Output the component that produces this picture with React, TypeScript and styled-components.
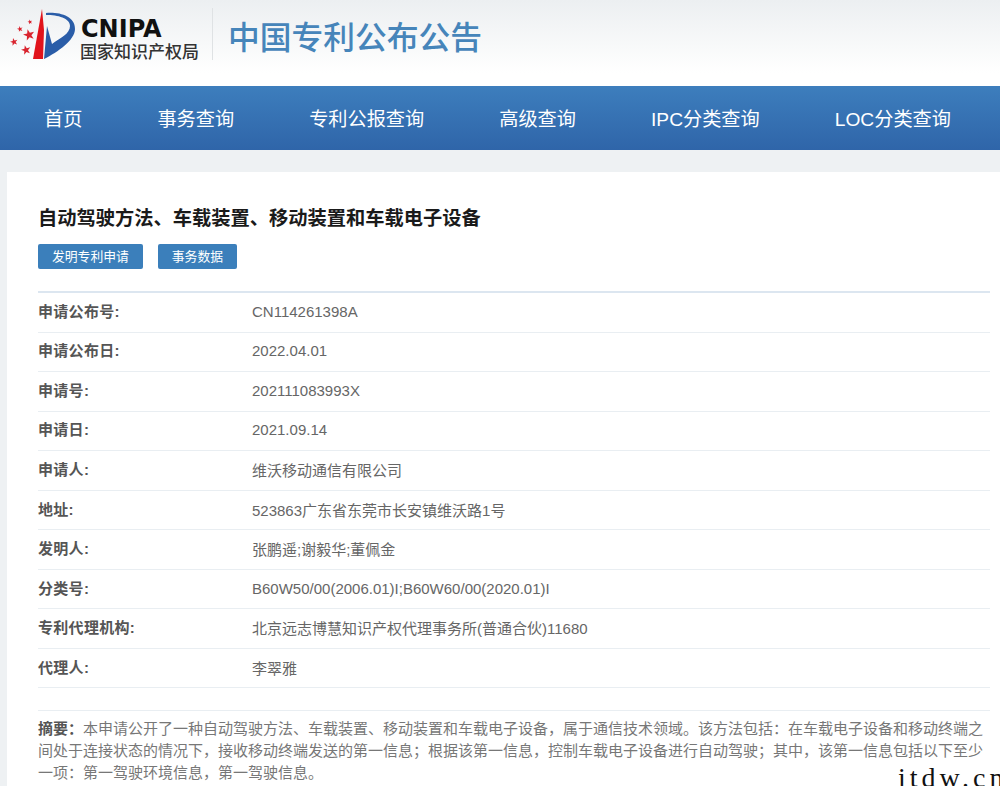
import React from 'react'
import styled, { createGlobalStyle } from 'styled-components'

const GlobalStyle = createGlobalStyle`
  html, body {
    margin: 0;
    padding: 0;
    background: #eef1f3;
    overflow: hidden;
  }
  * { box-sizing: border-box; }
`

const Page = styled.div`
  position: relative;
  width: 1000px;
  height: 786px;
  overflow: hidden;
  font-family: "Liberation Sans", "Noto Sans CJK SC", sans-serif;
`
const Header = styled.header`
  height: 86px;
  display: flex;
  align-items: flex-start;
  padding: 8px 0 0 8px;
  background: linear-gradient(180deg, #eceff1 0%, #ffffff 85%);
`
const LogoText = styled.div`
  display: flex;
  flex-direction: column;
  width: 132px;
`
const LogoLatin = styled.div`
  font-family: "DejaVu Sans", sans-serif;
  font-size: 24px;
  line-height: 24px;
  margin: 9px 0 0 1px;
  font-weight: 700;
  color: #111;
`
const LogoCn = styled.div`
  font-size: 17px;
  line-height: 20px;
  margin-top: 2px;
  color: #333;
  font-weight: 500;
  white-space: nowrap;
`
const HeaderRule = styled.div`
  width: 1px;
  height: 52px;
  background: #dfe2e4;
`
const SiteTitle = styled.div`
  margin: 8px 0 0 15px;
  font-size: 31.75px;
  line-height: 44px;
  font-weight: 500;
  color: #4685ba;
  white-space: nowrap;
`
const Nav = styled.nav`
  height: 64px;
  display: flex;
  align-items: center;
  gap: 75px;
  padding-left: 44px;
  background: linear-gradient(180deg, #3d7ebd 0%, #2f65a9 100%);
`
const NavItem = styled.a`
  color: #fff;
  font-size: 19.2px;
  white-space: nowrap;
`
const Card = styled.main`
  margin: 22px 0 0 7px;
  height: 620px;
  background: #fff;
  padding: 33px 10px 0 31px;
`
const Title = styled.h1`
  margin: 0;
  font-size: 19.26px;
  line-height: 27px;
  font-weight: 700;
  color: #1a1a1a;
  white-space: nowrap;
`
const Tags = styled.div`
  display: flex;
  gap: 15px;
  margin-top: 12px;
`
const Tag = styled.span`
  display: flex;
  align-items: center;
  height: 25px;
  padding: 0 14px 3px;
  border-radius: 2px;
  background: #3b7fbb;
  color: #fff;
  font-size: 12.8px;
  white-space: nowrap;
`
const Fields = styled.div`
  margin-top: 22px;
  border-top: 2px solid #dce6f0;
`
const Row = styled.div`
  display: flex;
  align-items: center;
  height: 39.55px;
  padding-bottom: 2px;
  border-bottom: 1px solid #e9eef2;
  font-size: 15px;
`
const Label = styled.div`
  width: 214px;
  padding-bottom: 2px;
  font-weight: 700;
  letter-spacing: 0.3px;
  color: #555;
`
const Value = styled.div`
  color: #666;
  white-space: nowrap;
`
const Abstract = styled.p`
  margin: 22px 0 0;
  padding-top: 7px;
  border-top: 1px solid #e9eef2;
  font-size: 15px;
  line-height: 22px;
  color: #777;
  white-space: nowrap;
`
const AbstractLabel = styled.b`
  color: #555;
`
const Watermark = styled.div`
  position: absolute;
  left: 898px;
  top: 762px;
  font-family: "Liberation Serif", serif;
  font-size: 28px;
  line-height: 32px;
  letter-spacing: 4px;
  color: #111;
  white-space: nowrap;
`

const navItems = ['首页', '事务查询', '专利公报查询', '高级查询', 'IPC分类查询', 'LOC分类查询']

const fields = [
  ['申请公布号:', 'CN114261398A'],
  ['申请公布日:', '2022.04.01'],
  ['申请号:', '202111083993X'],
  ['申请日:', '2021.09.14'],
  ['申请人:', '维沃移动通信有限公司'],
  ['地址:', '523863广东省东莞市长安镇维沃路1号'],
  ['发明人:', '张鹏遥;谢毅华;董佩金'],
  ['分类号:', 'B60W50/00(2006.01)I;B60W60/00(2020.01)I'],
  ['专利代理机构:', '北京远志博慧知识产权代理事务所(普通合伙)11680'],
  ['代理人:', '李翠雅'],
]

// full-width punctuation written as escapes
const abstractLabel = '摘要\uFF1A'
const abstractLines = [
  '本申请公开了一种自动驾驶方法、车载装置、移动装置和车载电子设备\uFF0C属于通信技术领域。该方法包括\uFF1A在车载电子设备和移动终端之',
  '间处于连接状态的情况下\uFF0C接收移动终端发送的第一信息\uFF1B根据该第一信息\uFF0C控制车载电子设备进行自动驾驶\uFF1B其中\uFF0C该第一信息包括以下至少',
  '一项\uFF1A第一驾驶环境信息\uFF0C第一驾驶信息。',
]

const Star = ({ x, y, r }: { x: number; y: number; r: number }) => {
  const pts = Array.from({ length: 10 }, (_, i) => {
    const a = -Math.PI / 2 + (i * Math.PI) / 5 - 0.25
    const d = i % 2 ? r * 0.4 : r
    return `${x + d * Math.cos(a)},${y + d * Math.sin(a)}`
  }).join(' ')
  return <polygon points={pts} fill="#d9232e" />
}

const Logo = () => (
  <svg width="72" height="54" viewBox="8 8 72 54" style={{ flex: 'none' }}>
    <Star x={30} y={22} r={2.5} />
    <Star x={20} y={29} r={3} />
    <Star x={29} y={35} r={6} />
    <Star x={14} y={42} r={4} />
    <Star x={26} y={50} r={5} />
    <polygon points="42,9 33,59 43,59 44,30" fill="#e1141c" />
    <path
      d="M46 13 C60 12 75 16 75 29 C75 40 58 52 44 59 L47 26 L52 44 C60 38 70 34 70 26 C70 18 58 15 46 15 Z"
      fill="#2a5da8"
    />
  </svg>
)

export default function App() {
  return (
    <Page>
      <GlobalStyle />
      <Header>
        <Logo />
        <LogoText>
          <LogoLatin>CNIPA</LogoLatin>
          <LogoCn>国家知识产权局</LogoCn>
        </LogoText>
        <HeaderRule />
        <SiteTitle>中国专利公布公告</SiteTitle>
      </Header>
      <Nav>
        {navItems.map((x) => (
          <NavItem key={x}>{x}</NavItem>
        ))}
      </Nav>
      <Card>
        <Title>自动驾驶方法、车载装置、移动装置和车载电子设备</Title>
        <Tags>
          <Tag>发明专利申请</Tag>
          <Tag>事务数据</Tag>
        </Tags>
        <Fields>
          {fields.map(([k, v]) => (
            <Row key={k}>
              <Label>{k}</Label>
              <Value>{v}</Value>
            </Row>
          ))}
        </Fields>
        <Abstract>
          <AbstractLabel>{abstractLabel}</AbstractLabel>
          {abstractLines[0]}
          <br />
          {abstractLines[1]}
          <br />
          {abstractLines[2]}
        </Abstract>
      </Card>
      <Watermark>itdw.cn</Watermark>
    </Page>
  )
}
